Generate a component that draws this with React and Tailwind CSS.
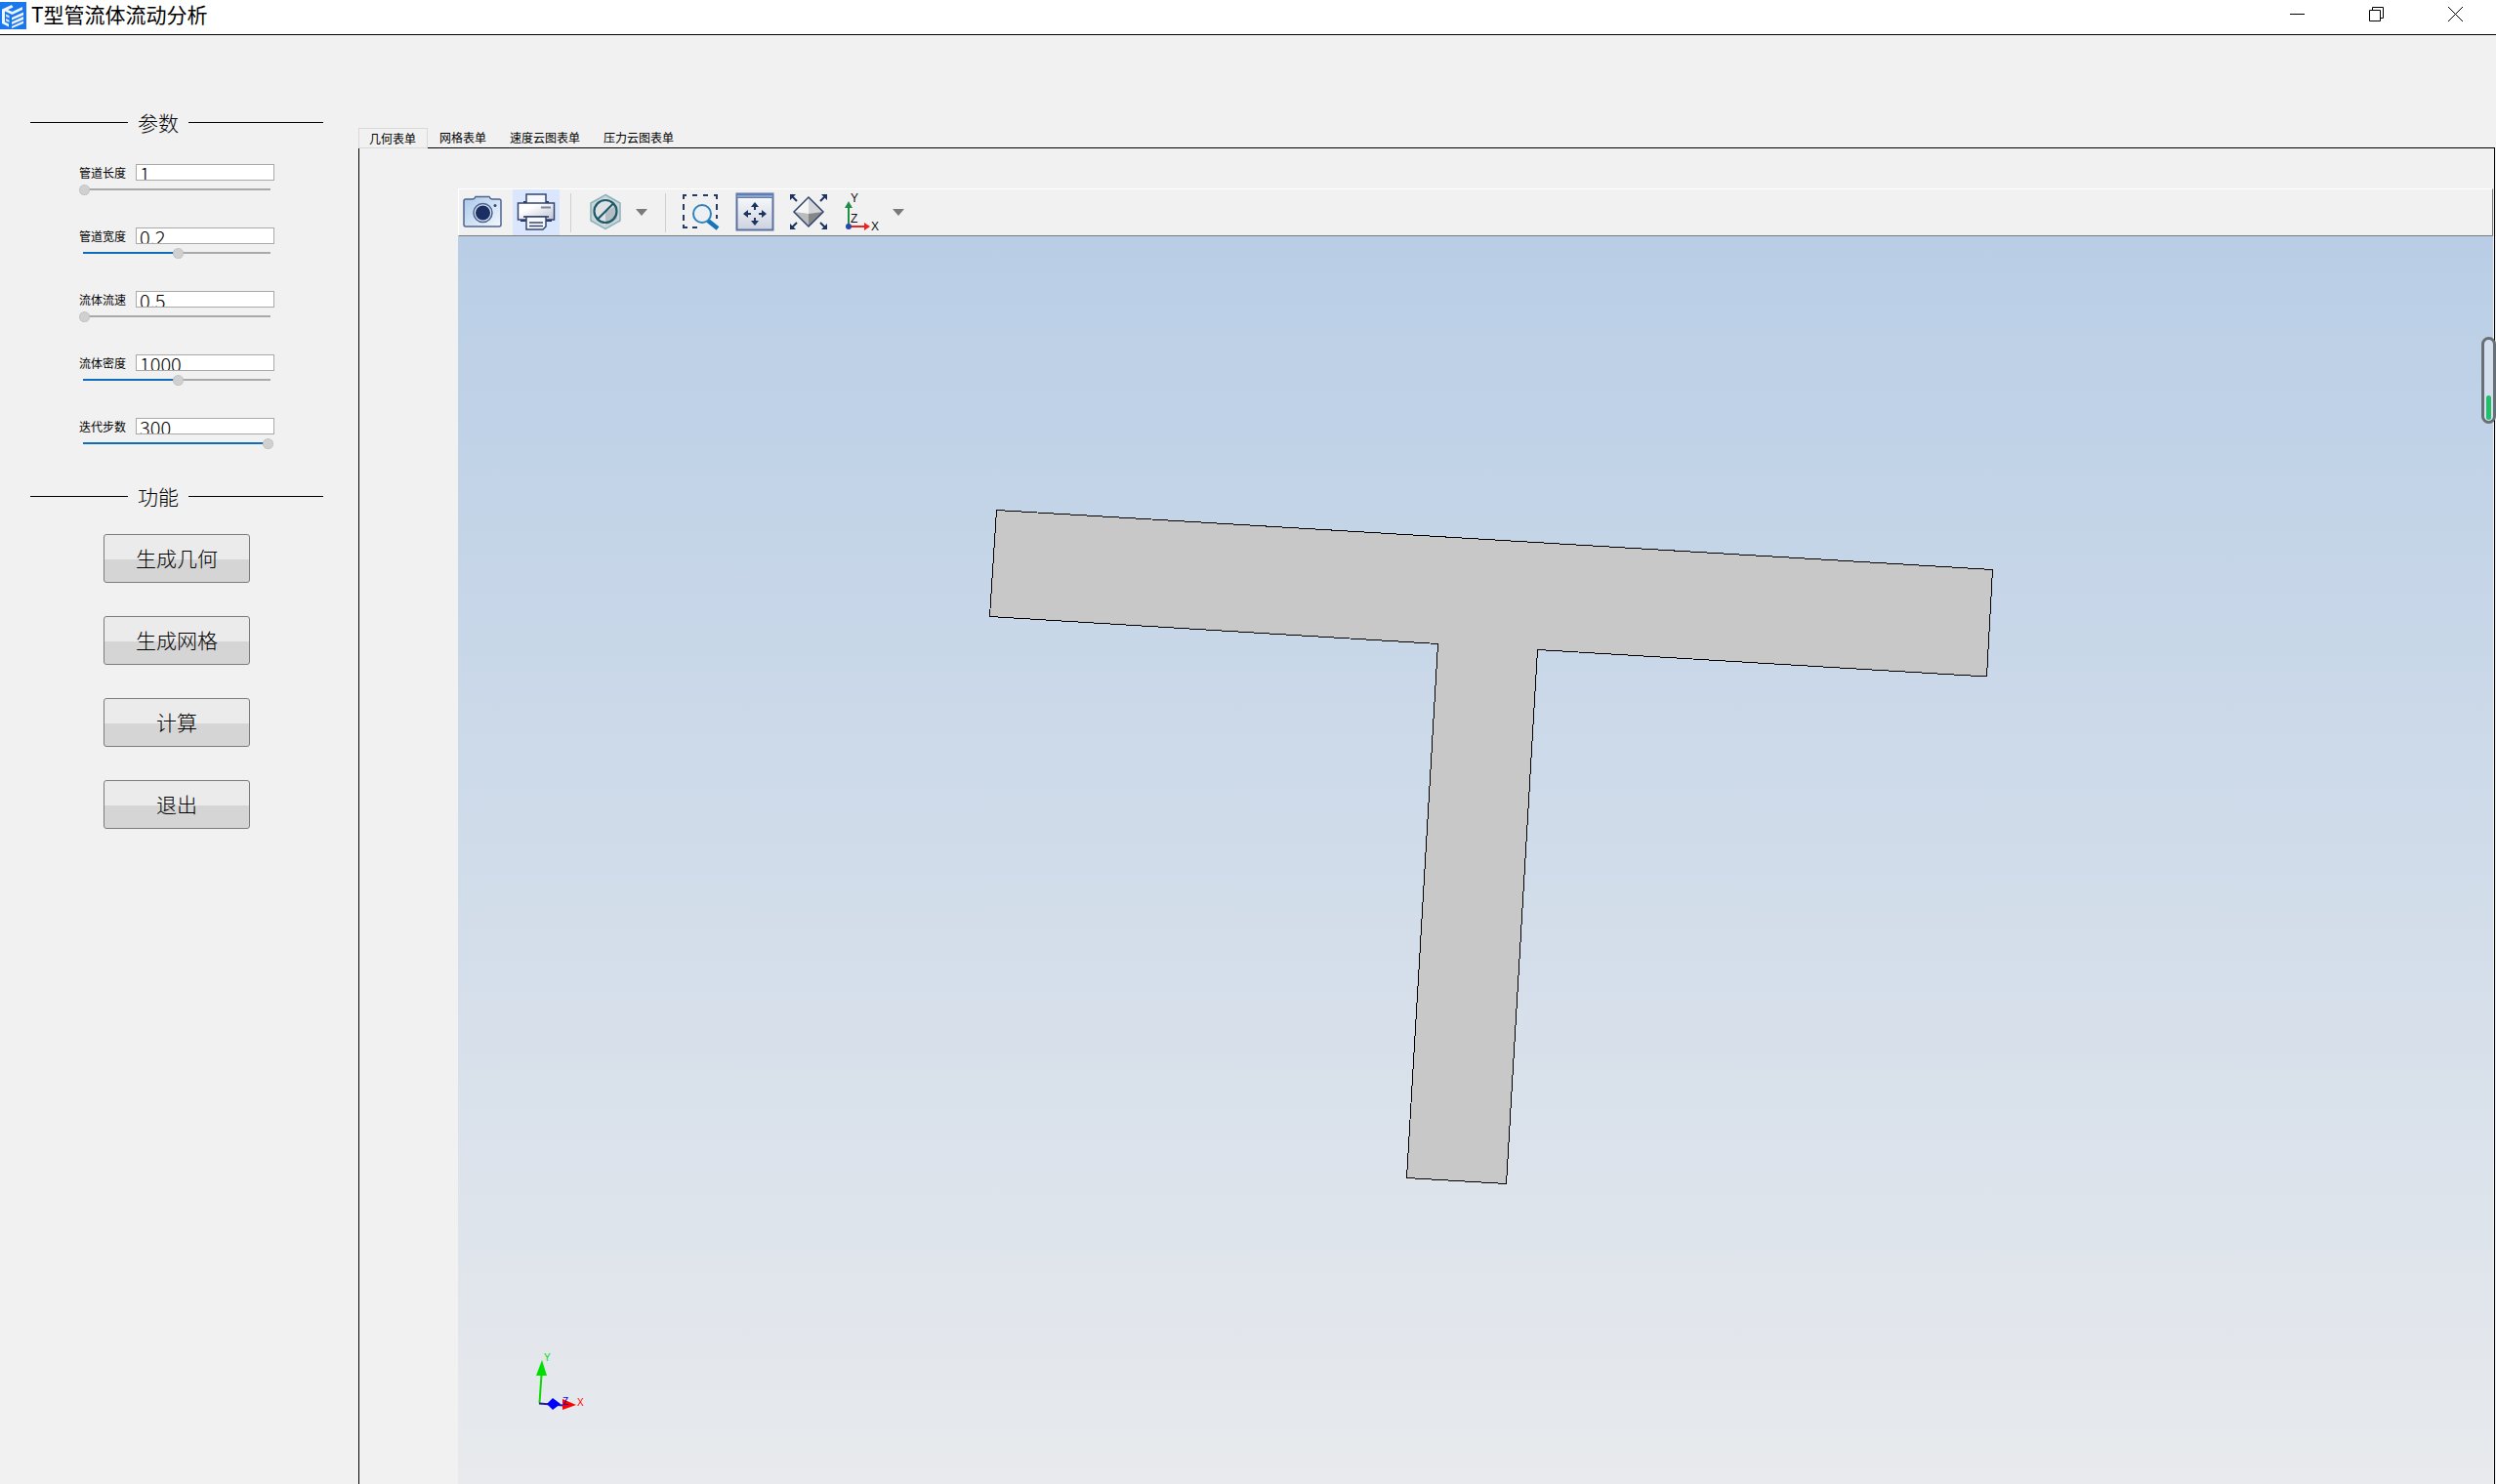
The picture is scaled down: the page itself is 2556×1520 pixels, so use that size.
import React, { useState } from 'react';

const PARAMS = [
  { id: 'length', label: '管道长度', value: '1', percent: 0 },
  { id: 'width', label: '管道宽度', value: '0.2', percent: 51 },
  { id: 'velocity', label: '流体流速', value: '0.5', percent: 0 },
  { id: 'density', label: '流体密度', value: '1000', percent: 51 },
  { id: 'steps', label: '迭代步数', value: '300', percent: 100 },
];

const ACTIONS = ['生成几何', '生成网格', '计算', '退出'];

const TABS = ['几何表单', '网格表单', '速度云图表单', '压力云图表单'];

const App = () => {
  const [activeTab, setActiveTab] = useState(0);

  return (
    <div className="flex flex-col h-screen overflow-hidden bg-[#f1f1f1] text-black font-['Noto_Sans_CJK_SC',sans-serif]">
      <TitleBar />
      <div className="flex flex-1 min-h-0">
        <Sidebar />
        <main className="flex flex-col flex-1 min-w-0 pt-[95px] pr-px">
          <div role="tablist" className="flex h-[21px]">
            {TABS.map((tab, index) => (
              <TabButton
                key={tab}
                label={tab}
                active={index === activeTab}
                onClick={() => setActiveTab(index)}
              />
            ))}
            <div className="flex-1 border-b border-black" />
          </div>
          <div className="flex flex-1 min-h-0 border-x border-black pt-[41px] pl-[101px] pr-px">
            <section className="flex flex-col flex-1 min-w-0">
              <Toolbar />
              <Viewport />
            </section>
          </div>
        </main>
      </div>
      <ScrollGauge />
    </div>
  );
};

const TitleBar = () => (
  <header className="flex items-center justify-between h-9 shrink-0 bg-white border-b border-black">
    <div className="flex items-center h-full pb-1">
      <LogoIcon />
      <h1 className="ml-[5px] pb-1 text-[21px] leading-[26px]">T型管流体流动分析</h1>
    </div>
    <div className="flex h-full pb-1.5 pr-px">
      <button aria-label="最小化" className="flex items-center justify-center w-[81px]">
        <svg width="15" height="15" viewBox="0 0 15 15" stroke="#000" fill="none">
          <path d="M0 7.5H15" />
        </svg>
      </button>
      <button aria-label="还原" className="flex items-center justify-center w-[81px]">
        <svg width="15" height="15" viewBox="0 0 15 15" stroke="#000" fill="none">
          <path d="M.5 3.5H11.5V14.5H.5ZM3.5 3.5V.5H14.5V11.5H11.5" />
        </svg>
      </button>
      <button aria-label="关闭" className="flex items-center justify-center w-[81px]">
        <svg width="15" height="15" viewBox="0 0 15 15" stroke="#000" fill="none">
          <path d="M0 0L15 15M15 0L0 15" />
        </svg>
      </button>
    </div>
  </header>
);

const Sidebar = () => (
  <aside className="w-[367px] shrink-0 pt-[74px] pl-[31px] pr-9">
    <SectionTitle>参数</SectionTitle>
    <div className="flex flex-col gap-7 mt-[27px] pl-[50px]">
      {PARAMS.map((param) => (
        <ParamField key={param.id} param={param} />
      ))}
    </div>
    <div className="mt-7">
      <SectionTitle>功能</SectionTitle>
    </div>
    <div className="flex flex-col items-center gap-[34px] mt-[23px]">
      {ACTIONS.map((action) => (
        <button
          key={action}
          className="w-[150px] h-[50px] border border-[#7c7c7c] rounded-[3px] bg-linear-to-b from-[#ebebeb] from-52% to-[#d5d5d5] to-52% text-[21px] font-light"
        >
          {action}
        </button>
      ))}
    </div>
  </aside>
);

const SectionTitle = ({ children }) => (
  <div className="flex items-center h-[31px]">
    <span className="w-[100px] h-px bg-black" />
    <h2 className="w-[62px] pb-0.5 text-center text-[21px] leading-7 font-light">{children}</h2>
    <span className="flex-1 h-px bg-black" />
  </div>
);

const ParamField = ({ param }) => {
  const [value, setValue] = useState(param.value);
  const [percent, setPercent] = useState(param.percent);

  return (
    <div className="h-[37px]">
      <div className="flex items-center gap-[10px] h-[17px]">
        <label htmlFor={param.id} className="w-12 text-xs whitespace-nowrap">
          {param.label}
        </label>
        <input
          type="text"
          id={param.id}
          value={value}
          onChange={(e) => setValue(e.target.value)}
          className="w-[142px] h-[17px] pl-[3px] pt-[2px] border border-[#a9a9a9] bg-white text-[20px] leading-[20px] font-light outline-none"
        />
      </div>
      <div className="relative flex items-center w-[199px] h-3 mt-[3px]">
        <div className="flex w-[192px] h-[2px] ml-1 bg-[#a9a9a9]">
          <div className="h-full bg-[#0f6cbd]" style={{ width: `${percent}%` }} />
        </div>
        <input
          type="range"
          aria-label={param.label}
          value={percent}
          onChange={(e) => setPercent(Number(e.target.value))}
          className="absolute inset-0 w-full h-3 appearance-none bg-transparent [&::-webkit-slider-thumb]:appearance-none [&::-webkit-slider-thumb]:size-[11px] [&::-webkit-slider-thumb]:rounded-full [&::-webkit-slider-thumb]:bg-[#d0d0d0] [&::-webkit-slider-thumb]:border [&::-webkit-slider-thumb]:border-dotted [&::-webkit-slider-thumb]:border-[#b4b4b4]"
        />
      </div>
    </div>
  );
};

const TabButton = ({ label, active, onClick }) => (
  <button
    role="tab"
    aria-selected={active}
    onClick={onClick}
    className={`shrink-0 h-[21px] text-xs leading-4 whitespace-nowrap ${
      active ? 'pl-[10px] pr-[11px] border border-[#d9d9d9]' : 'px-3 border-b border-black'
    }`}
  >
    {label}
  </button>
);

const Toolbar = () => (
  <div role="toolbar" className="flex items-center h-[49px] shrink-0 border-t border-l border-t-white border-l-white border-b border-r border-b-[#7a7a7a] border-r-[#7a7a7a]">
    <ToolButton label="截图"><CameraIcon /></ToolButton>
    <div className="w-[7px]" />
    <ToolButton label="打印" highlighted><PrinterIcon /></ToolButton>
    <Separator />
    <ToolButton label="透明度"><HexagonIcon /></ToolButton>
    <DropArrow label="透明度选项" />
    <Separator />
    <ToolButton label="框选缩放"><ZoomBoxIcon /></ToolButton>
    <div className="w-2" />
    <ToolButton label="平移"><PanIcon /></ToolButton>
    <div className="w-[7px]" />
    <ToolButton label="适应窗口"><FitIcon /></ToolButton>
    <div className="w-[7px]" />
    <ToolButton label="视图方向"><AxesIcon /></ToolButton>
    <DropArrow label="视图方向选项" />
  </div>
);

const ToolButton = ({ label, highlighted = false, children }) => (
  <button
    aria-label={label}
    className={`flex items-center justify-center w-12 h-full pb-px shrink-0 ${highlighted ? 'bg-[#d9e6fd]' : ''}`}
  >
    {children}
  </button>
);

const Separator = () => <div className="w-px h-10 mx-[11px] bg-[#cfcfcf]" />;

const DropArrow = ({ label }) => (
  <button aria-label={label} className="flex items-center justify-center w-[26px] h-full">
    <svg width="12" height="7" viewBox="0 0 12 7">
      <path d="M0 0H12L6 7Z" fill="#7a7a78" />
    </svg>
  </button>
);

const Viewport = () => (
  <div className="flex-1 min-h-0 bg-linear-to-b from-[#b9cee6] to-[#e8eaed]">
    <svg className="w-full h-full" viewBox="0 0 2084 1278" preserveAspectRatio="xMidYMid slice">
      <path
        d="M551.5 280.5L1571.5 341.5L1565.5 451L1105.5 423.5L1073.5 970.5L971.5 964.5L1003.5 417.5L544.5 389.5Z"
        fill="#c8c8c8"
        stroke="#000"
        shapeRendering="crispEdges"
      />
      <path d="M83.5 1195L85.5 1166" stroke="#0fd800" strokeWidth="2" />
      <path d="M86 1151L91 1167H80Z" fill="#00e000" />
      <path d="M83 1195.500L108 1197.500" stroke="#2a1a90" strokeWidth="2" />
      <path d="M107 1191L121 1197L107 1202Z" fill="#f00" />
      <path d="M91 1196L97 1190L105 1196L97 1202Z" fill="#00f" />
      <g fontFamily="Liberation Sans, sans-serif" fontSize="10">
        <text x="88" y="1152" fill="#00e000">Y</text>
        <text x="107" y="1197" fill="#00d">Z</text>
        <text x="122" y="1198" fill="#f00">X</text>
      </g>
    </svg>
  </div>
);

// floating level indicator that hangs over the right window edge
const ScrollGauge = () => (
  <div className="absolute right-0 top-[345px] w-[15px] h-[89px] flex items-end justify-center pb-px border-[3px] border-[#686f76] rounded-lg bg-[#d3dfee]">
    <div className="w-[5px] h-[25px] rounded-full bg-[#22bf68]" />
  </div>
);

const LogoIcon = () => (
  <svg width="27" height="28" viewBox="0 0 27 28">
    <rect width="27" height="28" fill="#1a78ee" />
    <path d="M2 7.500L12 3L13.500 5.500L8 8L12.500 10L23 5V8L12.500 13L5 9.500V20.500L9 22.500V25.500L2 22Z" fill="#eef5fe" />
    <path d="M12 16L24 10.500V13.500L12 18.500ZM12 20.500L24 15V18L12 23ZM12 25L24 19.500V22L12 27Z" fill="#eef5fe" />
    <path d="M6 12.500L9.500 14V16.500L6 15ZM6 17L9.500 18.500V21L6 19.500Z" fill="#cfe3fc" />
  </svg>
);

const CameraIcon = () => (
  <svg width="40" height="34" viewBox="0 0 40 34">
    <defs>
      <linearGradient id="camera" x1="0" y1="0" x2="1" y2="1">
        <stop offset="0" stopColor="#a9c8ea" />
        <stop offset="1" stopColor="#f3f8fd" />
      </linearGradient>
    </defs>
    <path
      d="M3 4H10Q12 4 13 1.500H27Q28 4 30 4H37Q39 4 39 6V30Q39 32 37 32H3Q1 32 1 30V6Q1 4 3 4Z"
      fill="url(#camera)"
      stroke="#4f638f"
      strokeWidth="1.500"
    />
    <circle cx="20.500" cy="18" r="9.500" fill="#d5e4f5" stroke="#4f638f" strokeWidth="1.500" />
    <circle cx="20.500" cy="18" r="7.500" fill="#1b2f63" />
    <circle cx="33" cy="10.500" r="1.500" fill="#33497c" />
  </svg>
);

const PrinterIcon = () => (
  <svg width="40" height="40" viewBox="0 0 40 40" stroke="#33446f" strokeWidth="1.500">
    <defs>
      <linearGradient id="printer" x1="0" y1="0" x2="1" y2="1">
        <stop offset="0.300" stopColor="#fff" />
        <stop offset="1" stopColor="#bfc3d3" />
      </linearGradient>
    </defs>
    <path d="M7 9H33V13H7ZM4 26H36V30H4Z" fill="#24355f" stroke="none" />
    <path d="M10 12V2H30V12" fill="#f7f8fc" />
    <rect x="1.500" y="11" width="37" height="17" fill="url(#printer)" />
    <path d="M7 25H33" stroke="#555f7d" strokeWidth="2" />
    <path d="M10 25H30V35L27 38H10Z" fill="#f7f8fc" />
    <path d="M13 31H27M13 34.500H27" />
    <path d="M25 15.500H35" stroke="#7d859e" strokeWidth="2" />
  </svg>
);

const HexagonIcon = () => (
  <svg width="34" height="38" viewBox="0 0 34 38">
    <path d="M17 1.500L32 10V28L17 36.500L2 28V10Z" fill="#c9d6da" stroke="#8fb1b8" strokeWidth="1.500" />
    <path d="M17 5L29 12V26L17 33L5 26V12Z" fill="#dfe2e5" />
    <path d="M17 19L29 12V26L17 33Z" fill="#b5bcc4" />
    <circle cx="17" cy="18.500" r="11.500" fill="none" stroke="#1f5a6a" strokeWidth="2.200" />
    <path d="M9 26.500L25 10.500" stroke="#1f5a6a" strokeWidth="2.200" />
  </svg>
);

const ZoomBoxIcon = () => (
  <svg width="40" height="38" viewBox="0 0 40 38" fill="none">
    <path
      d="M3 6V2H6M12 2H17M23 2H28M34 2H37V6M3 11V17M3 22V28M3 32V35H7M12 35H17M37 11V17M37 22V26"
      stroke="#263a68"
      strokeWidth="2"
    />
    <path d="M28 28L38 36" stroke="#1674b8" strokeWidth="4.500" />
    <circle cx="22" cy="21" r="9" fill="#edf0f3" stroke="#2e83bd" strokeWidth="2" />
  </svg>
);

const PanIcon = () => (
  <svg width="40" height="40" viewBox="0 0 40 40">
    <defs>
      <linearGradient id="pan" x1="0" y1="0" x2="0" y2="1">
        <stop offset="0" stopColor="#fbfcfd" />
        <stop offset="1" stopColor="#ccd2df" />
      </linearGradient>
    </defs>
    <rect x="1.500" y="1.500" width="37" height="37" fill="url(#pan)" stroke="#5d71a0" strokeWidth="2" />
    <path d="M1 1H39V6H1Z" fill="#5d7db4" />
    <path d="M2 4H38" stroke="#b9cde8" />
    <path d="M20 13V18M20 26V31M11 22H16M24 22H29" stroke="#1d3461" strokeWidth="2" />
    <path
      d="M20 10L24 15H16ZM20 34L24 29H16ZM8 22L13 18V26ZM32 22L27 18V26Z"
      fill="#1d3461"
    />
  </svg>
);

const FitIcon = () => (
  <svg width="40" height="38" viewBox="0 0 40 38">
    <path d="M20 4L35 19L20 34L5 19Z" fill="#d3d5d8" />
    <path d="M20 4L5 19L20 21Z" fill="#f5f5f6" />
    <path d="M20 21L35 19L20 34Z" fill="#858789" />
    <path d="M5 19L20 34V21Z" fill="#b9bbbd" />
    <path d="M20 4L35 19L20 34L5 19Z" fill="none" stroke="#33466f" strokeWidth="1.500" />
    <path d="M3 3L8 8M37 3L32 8M3 35L8 30M37 35L32 30" stroke="#1d3461" strokeWidth="2" />
    <path d="M1 1H7L1 7ZM39 1H33L39 7ZM1 37H7L1 31ZM39 37H33L39 31Z" fill="#1d3461" />
  </svg>
);

const AxesIcon = () => (
  <svg width="40" height="40" viewBox="0 0 40 40">
    <path d="M6 35V13" stroke="#1f8f45" strokeWidth="2" />
    <path d="M6 9L10 16H2Z" fill="#1f8f45" />
    <path d="M7 35H23" stroke="#e22" strokeWidth="2" />
    <path d="M28 35L22 31V39Z" fill="#e22" />
    <circle cx="6" cy="35" r="3" fill="#2748a8" />
    <g fontFamily="Liberation Sans, sans-serif" fontSize="12" fill="#111">
      <text x="8" y="10">Y</text>
      <text x="8" y="31">Z</text>
      <text x="29" y="39">X</text>
    </g>
  </svg>
);

export default App;
